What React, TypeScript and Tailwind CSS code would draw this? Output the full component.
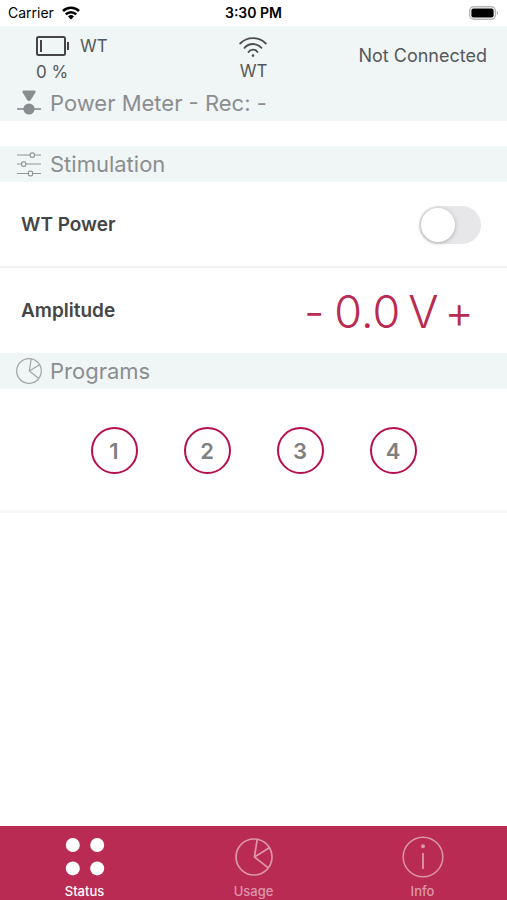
import { useState } from "react";
import type { ReactNode } from "react";

function WifiSolid() {
  return (
    <svg width="18" height="14" viewBox="0 0 18 14" fill="none" stroke="#000" strokeWidth="2.6" aria-hidden="true">
      <path d="M1 5 A11.3 11.3 0 0 1 17 5" />
      <path d="M3.8 8.4 A7.4 7.4 0 0 1 14.2 8.4" />
      <path d="M9 13.4 L6 10.4 A4.3 4.3 0 0 1 12 10.4 Z" fill="#000" stroke="none" />
    </svg>
  );
}

function PhoneBattery() {
  return (
    <svg width="30" height="14" viewBox="0 0 30 14" aria-hidden="true">
      <rect x="0.7" y="0.7" width="25.6" height="12.6" rx="4" fill="#fff" stroke="#b5b5b5" strokeWidth="1.4" />
      <rect x="2.4" y="2.4" width="22.2" height="9.2" rx="2" fill="#000" />
      <path d="M27.8 4.6 Q30.4 7 27.8 9.4 Z" fill="#b5b5b5" />
    </svg>
  );
}

function DeviceBattery() {
  return (
    <svg width="34" height="20" viewBox="0 0 34 20" fill="none" aria-hidden="true">
      <rect x="1" y="1" width="28" height="18" rx="1.5" stroke="#454545" strokeWidth="2" />
      <rect x="4" y="4" width="2" height="12" fill="#454545" />
      <rect x="31" y="6" width="2" height="8" fill="#454545" />
    </svg>
  );
}

function Signal() {
  return (
    <svg width="28" height="20" viewBox="0 0 28 20" fill="none" stroke="#4d4d4d" strokeWidth="1.8" strokeLinecap="round" aria-hidden="true">
      <path d="M1.2 6.5 A18 18 0 0 1 26.8 6.5" />
      <path d="M5.5 10.8 A11.4 11.4 0 0 1 22.5 10.8" />
      <path d="M9.5 15 A5.4 5.4 0 0 1 18.5 15" />
      <circle cx="14" cy="18.6" r="1.3" fill="#4d4d4d" stroke="none" />
    </svg>
  );
}

function MeterIcon() {
  return (
    <svg width="26" height="26" viewBox="0 0 26 26" fill="#8a8d8f" aria-hidden="true">
      <path d="M7.6 0.6 H18.4 Q20.2 0.8 19.4 2.6 L14.8 10 Q13 12 11.2 10 L6.6 2.6 Q5.8 0.8 7.6 0.6 Z" />
      <circle cx="13" cy="19" r="5.6" />
      <rect x="1" y="18.2" width="24" height="1.6" />
    </svg>
  );
}

function SlidersIcon() {
  return (
    <svg width="26" height="26" viewBox="0 0 26 26" fill="none" stroke="#939698" strokeWidth="1.2" aria-hidden="true">
      <path d="M1 4 H14 M19 4 H25 M1 13 H5 M10 13 H25 M1 22.5 H12 M17 22.5 H25" />
      <rect x="14.2" y="1.8" width="4.2" height="4.6" rx="1.6" />
      <rect x="5.6" y="10.8" width="4.2" height="4.6" rx="1.6" />
      <rect x="12.4" y="20.2" width="4.2" height="4.6" rx="1.6" />
    </svg>
  );
}

function PieIcon({ size, stroke }: { size: number; stroke: number }) {
  return (
    <svg width={size} height={size} viewBox="0 0 38 38" fill="none" stroke="currentColor" strokeWidth={stroke} strokeLinejoin="round" aria-hidden="true">
      <circle cx="19" cy="19" r="18" />
      <path d="M22.2 1.4 L19.4 19 L34.4 9.8 M19.4 19 L33 29.6" />
    </svg>
  );
}

function DotsIcon() {
  return (
    <svg width="40" height="38" viewBox="0 0 40 38" fill="#fff" aria-hidden="true">
      <circle cx="7.8" cy="7" r="7" />
      <circle cx="32.2" cy="7" r="7" />
      <circle cx="7.8" cy="30.4" r="7" />
      <circle cx="32.2" cy="30.4" r="7" />
    </svg>
  );
}

function InfoIcon() {
  return (
    <svg width="42" height="42" viewBox="0 0 42 42" fill="none" stroke="currentColor" strokeWidth="1.5" aria-hidden="true">
      <circle cx="21" cy="21" r="19.8" />
      <path d="M21 17 V33" strokeWidth="1.8" />
      <circle cx="21" cy="10.2" r="2" fill="currentColor" stroke="none" />
    </svg>
  );
}

function SectionTitle({ icon, children }: { icon: ReactNode; children: ReactNode }) {
  return (
    <h2 className="flex h-9 items-center gap-2 bg-[#f0f5f6] px-4 text-[22px] leading-7 text-[#8b8e90]">
      <span className="flex w-[26px] justify-center text-[#a3a6a8]">{icon}</span>
      {children}
    </h2>
  );
}

const tabs = [
  { name: "Status", icon: <DotsIcon /> },
  { name: "Usage", icon: <PieIcon size={38} stroke={1.7} /> },
  { name: "Info", icon: <InfoIcon /> },
];

export default function App() {
  const [power, setPower] = useState(false);
  const [volts, setVolts] = useState(0);
  const [tab, setTab] = useState("Status");

  return (
    <div className="flex min-h-screen flex-col bg-white font-['Inter','Liberation_Sans',sans-serif] text-[#454545]">
      <div className="grid h-[26px] grid-cols-3 items-center px-2 text-sm text-black">
        <div className="flex items-center gap-2">
          Carrier <WifiSolid />
        </div>
        <div className="text-center font-semibold">3:30 PM</div>
        <div className="flex justify-end">
          <PhoneBattery />
        </div>
      </div>

      <header className="bg-[#f0f5f6]">
        <div className="grid h-[59px] grid-cols-3 px-5 text-[17px] leading-6 text-[#55585a]">
          <div className="pt-2 pl-4">
            <div className="flex items-center gap-2.5">
              <DeviceBattery /> <span>WT</span>
            </div>
            <div className="pt-0.5">0 %</div>
          </div>
          <div className="flex flex-col items-center gap-0.5 pt-[11px]">
            <Signal />
            <div>WT</div>
          </div>
          <div className="flex items-center justify-end text-lg whitespace-nowrap">Not Connected</div>
        </div>
        <SectionTitle icon={<MeterIcon />}>Power Meter - Rec: -</SectionTitle>
      </header>

      <main className="grow pt-[25px]">
        <SectionTitle icon={<SlidersIcon />}>Stimulation</SectionTitle>
        <div className="flex h-[86px] items-center justify-between border-b-2 border-[#f0f1f1] pt-0.5 pr-[26px] pl-[21px]">
          <label htmlFor="power" className="text-[19px] font-semibold">
            WT Power
          </label>
          <input
            id="power"
            type="checkbox"
            role="switch"
            checked={power}
            onChange={(e) => setPower(e.target.checked)}
            className="flex h-[38px] w-[62px] appearance-none items-center rounded-full bg-[#e7e7e9] p-0.5 before:size-[34px] before:rounded-full before:bg-white before:shadow-[0_1px_4px_rgba(0,0,0,0.25)] checked:justify-end checked:bg-[#b92b52]"
          />
        </div>
        <div className="flex h-[85px] items-center justify-between pt-0.5 pr-[33px] pl-[21px]">
          <span className="text-[19px] font-semibold">Amplitude</span>
          <div className="flex items-center gap-2.5 text-[45px] leading-none font-light text-[#b92b52]">
            <button type="button" aria-label="Decrease amplitude" onClick={() => setVolts(Math.max(0, volts - 1))}>
              -
            </button>
            <output className="flex gap-2">
              <span>{(volts / 10).toFixed(1)}</span>
              <span>V</span>
            </output>
            <button type="button" aria-label="Increase amplitude" className="-ml-1" onClick={() => setVolts(volts + 1)}>
              +
            </button>
          </div>
        </div>
        <SectionTitle icon={<PieIcon size={26} stroke={1.8} />}>Programs</SectionTitle>
        <div className="flex h-[124px] items-center justify-center gap-[46px] border-b-3 border-[#f5f6f6] pt-0.5">
          {[1, 2, 3, 4].map((n) => (
            <button
              key={n}
              type="button"
              className="size-[47px] rounded-full border-2 border-[#b80f50] text-[22px] leading-7 font-semibold text-[#808080]"
            >
              {n}
            </button>
          ))}
        </div>
      </main>

      <nav className="grid h-[74px] grid-cols-3 bg-[#b92b52]">
        {tabs.map((t) => (
          <button
            key={t.name}
            type="button"
            onClick={() => setTab(t.name)}
            className={
              tab === t.name
                ? "flex flex-col items-center pt-2 text-white"
                : "flex flex-col items-center pt-2 text-[#dd97ab]"
            }
          >
            <span className="flex h-[46px] items-center">{t.icon}</span>
            <span className="text-[13px] leading-[22px] font-medium">{t.name}</span>
          </button>
        ))}
      </nav>
    </div>
  );
}
